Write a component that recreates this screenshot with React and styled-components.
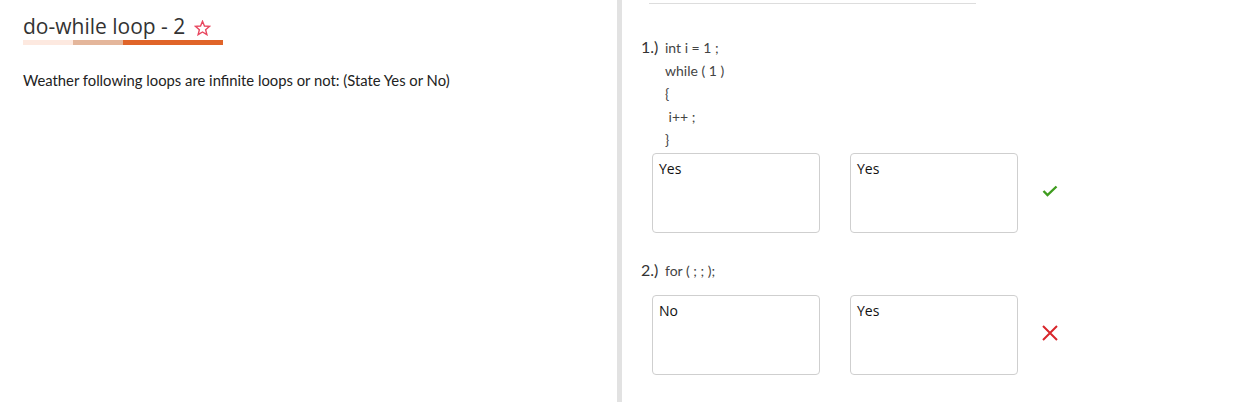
import React from 'react';
import styled, { createGlobalStyle } from 'styled-components';

const GlobalStyle = createGlobalStyle`
  html, body {
    margin: 0;
    padding: 0;
    background: #fff;
    font-family: 'Open Sans', 'Noto Sans', sans-serif;
    color: #222;
  }
`;

const questions = [
  {
    num: '1.)',
    code: ['int i = 1 ;', 'while ( 1 )', '{', ' i++ ;', '}'],
    answer: 'Yes',
    expected: 'Yes',
    correct: true,
    spaced: false,
  },
  {
    num: '2.)',
    code: ['for ( ; ; );'],
    answer: 'No',
    expected: 'Yes',
    correct: false,
    spaced: true,
  },
];

const Check = () => (
  <svg width="16" height="12" viewBox="0 0 16 12">
    <path d="M1.5 6 L5.5 10 L14.5 1.5" fill="none" stroke="#3f9c1f" strokeWidth="2.4" />
  </svg>
);

const Cross = () => (
  <svg width="16" height="16" viewBox="0 0 16 16">
    <path d="M1 1 L15 15 M15 1 L1 15" fill="none" stroke="#d8262b" strokeWidth="2" />
  </svg>
);

const Star = () => (
  <svg width="17" height="16" viewBox="0 0 24 23">
    <path
      d="M12 1.8 L14.8 8.6 L22.2 9.1 L16.5 13.9 L18.3 21.1 L12 17.2 L5.7 21.1 L7.5 13.9 L1.8 9.1 L9.2 8.6 Z"
      fill="none"
      stroke="#e8475f"
      strokeWidth="2"
      strokeLinejoin="miter"
    />
  </svg>
);

const App = () => {
  return (
    <>
      <GlobalStyle />
      <Page>
        <LeftPanel>
          <TitleRow>
            <Title>do-while loop - 2</Title>
            <StarWrap>
              <Star />
            </StarWrap>
          </TitleRow>
          <Progress>
            <Segment color="#fde9e0" width={50} />
            <Segment color="#e4b69b" width={50} />
            <Segment color="#e06429" width={100} />
          </Progress>
          <Prompt>Weather following loops are infinite loops or not: (State Yes or No)</Prompt>
        </LeftPanel>
        <Divider />
        <RightPanel>
          <TopRule />
          {questions.map((q) => (
            <Question key={q.num}>
              <QuestionHead>
                <Num>{q.num}</Num>
                <Code>
                  {q.code.map((line, i) => (
                    <CodeLine key={i}>{line}</CodeLine>
                  ))}
                </Code>
              </QuestionHead>
              <AnswerRow spaced={q.spaced}>
                <AnswerBox>{q.answer}</AnswerBox>
                <AnswerBox>{q.expected}</AnswerBox>
                <Mark>{q.correct ? <Check /> : <Cross />}</Mark>
              </AnswerRow>
            </Question>
          ))}
        </RightPanel>
      </Page>
    </>
  );
};

export default App;

const Page = styled.div`
  display: flex;
  width: 1248px;
  height: 402px;
  overflow: hidden;
`;

const LeftPanel = styled.div`
  box-sizing: border-box;
  flex-shrink: 0;
  width: 617px;
  padding: 13px 0 0 23px;
`;

const TitleRow = styled.div`
  display: flex;
  align-items: center;
  height: 27px;
`;

const Title = styled.h1`
  margin: 0;
  font-family: 'Open Sans', sans-serif;
  font-size: 21px;
  font-weight: 400;
  color: #333;
  line-height: 27px;
`;

const StarWrap = styled.span`
  display: flex;
  margin-left: 9px;
  margin-top: 2px;
`;

const Progress = styled.div`
  display: flex;
  width: 200px;
  height: 5px;
`;

const Segment = styled.div`
  width: ${(p) => p.width}px;
  background: ${(p) => p.color};
`;

const Prompt = styled.p`
  margin: 25px 0 0;
  font-family: 'Lato', sans-serif;
  font-size: 14.8px;
  line-height: 20px;
  color: #222;
`;

const Divider = styled.div`
  flex-shrink: 0;
  width: 5px;
  background: #e2e2e2;
`;

const RightPanel = styled.div`
  flex: 1;
  padding-left: 19px;
`;

const TopRule = styled.div`
  width: 327px;
  height: 1px;
  background: #ddd;
  margin: 3px 0 0 8px;
`;

const Question = styled.div`
  margin-top: 31px;

  & + & {
    margin-top: 25px;
  }
`;

const QuestionHead = styled.div`
  display: flex;
  align-items: flex-start;
`;

const Num = styled.span`
  font-family: 'Lato', sans-serif;
  font-size: 16px;
  line-height: 23px;
  color: #333;
  width: 24px;
`;

const Code = styled.div`
  font-family: 'Lato', sans-serif;
  font-size: 14px;
  line-height: 23px;
  color: #444;
  padding-top: 1px;
`;

const CodeLine = styled.div`
  white-space: pre;
`;

const AnswerRow = styled.div`
  display: flex;
  align-items: center;
  gap: 30px;
  margin: ${(p) => (p.spaced ? '13px' : '2px')} 0 0 11px;
`;

const AnswerBox = styled.div`
  box-sizing: border-box;
  width: 168px;
  height: 80px;
  border: 1px solid #cfcfcf;
  border-radius: 4px;
  padding: 4px 6px;
  font-family: 'Open Sans', sans-serif;
  font-size: 14px;
  line-height: 22px;
  color: #111;
`;

const Mark = styled.div`
  display: flex;
  margin: 0 0 5px -6px;
`;
